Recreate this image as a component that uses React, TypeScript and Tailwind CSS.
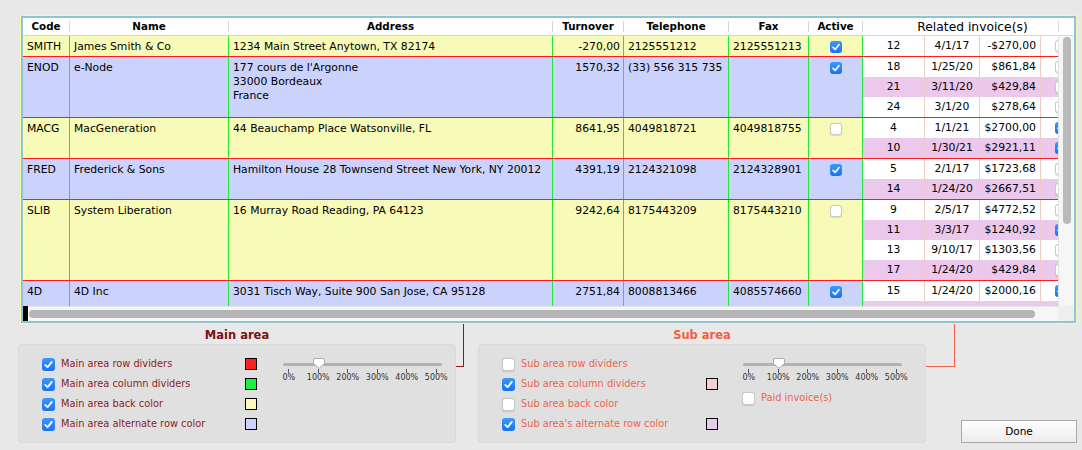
import React from "react";

type Invoice = { num: string; date: string; amount: string; paid: boolean };
type Row = {
  code: string;
  name: string;
  address: string[];
  turnover: string;
  phone: string;
  fax: string;
  active: boolean;
  invoices: Invoice[];
};

const rows: Row[] = [
  {
    code: "SMITH",
    name: "James Smith & Co",
    address: ["1234 Main Street Anytown, TX 82174"],
    turnover: "-270,00",
    phone: "2125551212",
    fax: "2125551213",
    active: true,
    invoices: [{ num: "12", date: "4/1/17", amount: "-$270,00", paid: false }],
  },
  {
    code: "ENOD",
    name: "e-Node",
    address: ["177 cours de l'Argonne", "33000 Bordeaux", "France"],
    turnover: "1570,32",
    phone: "(33) 556 315 735",
    fax: "",
    active: true,
    invoices: [
      { num: "18", date: "1/25/20", amount: "$861,84", paid: false },
      { num: "21", date: "3/11/20", amount: "$429,84", paid: false },
      { num: "24", date: "3/1/20", amount: "$278,64", paid: false },
    ],
  },
  {
    code: "MACG",
    name: "MacGeneration",
    address: ["44 Beauchamp Place Watsonville, FL"],
    turnover: "8641,95",
    phone: "4049818721",
    fax: "4049818755",
    active: false,
    invoices: [
      { num: "4", date: "1/1/21", amount: "$2700,00", paid: true },
      { num: "10", date: "1/30/21", amount: "$2921,11", paid: true },
    ],
  },
  {
    code: "FRED",
    name: "Frederick & Sons",
    address: ["Hamilton House 28 Townsend Street New York, NY 20012"],
    turnover: "4391,19",
    phone: "2124321098",
    fax: "2124328901",
    active: true,
    invoices: [
      { num: "5", date: "2/1/17", amount: "$1723,68", paid: false },
      { num: "14", date: "1/24/20", amount: "$2667,51", paid: false },
    ],
  },
  {
    code: "SLIB",
    name: "System Liberation",
    address: ["16 Murray Road Reading, PA 64123"],
    turnover: "9242,64",
    phone: "8175443209",
    fax: "8175443210",
    active: false,
    invoices: [
      { num: "9", date: "2/5/17", amount: "$4772,52", paid: false },
      { num: "11", date: "3/3/17", amount: "$1240,92", paid: true },
      { num: "13", date: "9/10/17", amount: "$1303,56", paid: false },
      { num: "17", date: "1/24/20", amount: "$429,84", paid: false },
    ],
  },
  {
    code: "4D",
    name: "4D Inc",
    address: ["3031 Tisch Way, Suite 900 San Jose, CA 95128"],
    turnover: "2751,84",
    phone: "8008813466",
    fax: "4085574660",
    active: true,
    invoices: [
      { num: "15", date: "1/24/20", amount: "$2000,16", paid: true },
      { num: "", date: "", amount: "", paid: false },
    ],
  },
];

function Check({ checked, big }: { checked: boolean; big?: boolean }) {
  const size = big ? "w-[13px] h-[13px]" : "w-[12px] h-[12px]";
  if (checked) {
    return (
      <div
        className={`${size} shrink-0 rounded-[3px] bg-gradient-to-b from-[#3d97ff] to-[#1572f3] flex items-center justify-center`}
      >
        <svg viewBox="0 0 13 13" className="w-full h-full">
          <path
            d="M3.3 6.9 L5.6 9.2 L9.8 3.9"
            fill="none"
            stroke="white"
            strokeWidth="1.8"
            strokeLinecap="round"
            strokeLinejoin="round"
          />
        </svg>
      </div>
    );
  }
  return (
    <div
      className={`${size} shrink-0 rounded-[3px] bg-white border border-[#c9c9c9] shadow-[0_0.5px_1px_rgba(0,0,0,0.12)]`}
    />
  );
}

function HeadCell({ w, label, bold = true }: { w: string; label: string; bold?: boolean }) {
  return (
    <div className={`${w} shrink-0 flex items-center h-full`}>
      <div
        className={`flex-1 text-center pt-[2px] ${bold ? "font-bold text-[10.3px]" : "text-[12.3px] pl-[24px] whitespace-nowrap"}`}
      >
        {label}
      </div>
      <div className="w-[1px] h-[11px] bg-[#d6d6d6]" />
    </div>
  );
}

function Slider() {
  const ticks = ["0%", "100%", "200%", "300%", "400%", "500%"];
  return (
    <div className="flex flex-col">
      <div className="relative h-[20px] flex items-center">
        <div className="w-[159px] h-[3px] rounded-full bg-[#b2b2b2]" />
        <svg
          viewBox="0 0 12 11"
          className="absolute left-[30px] top-[4px] w-[12px] h-[11px]"
        >
          <path
            d="M2 0.5 H10 Q11.5 0.5 11.5 2 V5.6 L6 10.4 L0.5 5.6 V2 Q0.5 0.5 2 0.5 Z"
            fill="white"
            stroke="#a5a5a5"
            strokeWidth="0.9"
          />
        </svg>
      </div>
      <div className="-mt-[5px] -ml-[9px] w-[177px] grid grid-cols-6">
        {ticks.map((t) => (
          <div key={t} className="flex flex-col items-center">
            <div className="w-[1px] h-[4px] bg-[#555]" />
            <div className="text-[8px] leading-[10px] text-[#333]">{t}</div>
          </div>
        ))}
      </div>
    </div>
  );
}

type Opt = { label: string; checked: boolean; swatch?: string };

function Panel({
  title,
  titleColor,
  labelColor,
  opts,
  labelW,
  sliderGap,
  extra,
}: {
  title: string;
  titleColor: string;
  labelColor: string;
  opts: Opt[];
  labelW: string;
  sliderGap: string;
  extra?: React.ReactNode;
}) {
  return (
    <div className="flex flex-col w-full">
      <div className={`h-[20px] leading-[22px] text-center font-bold text-[11.5px] ${titleColor}`}>
        {title}
      </div>
      <div className="h-[99px] rounded-[4px] bg-[#e0e0e0] border border-[#d9d9d9] pl-[23px] pt-[9px] flex">
        <div className="flex flex-col">
          {opts.map((o) => (
            <div key={o.label} className="h-[20px] flex items-center">
              <Check checked={o.checked} big />
              <div className={`ml-[6px] pt-[1px] ${labelW} text-[9.8px] ${labelColor}`}>{o.label}</div>
              {o.swatch ? (
                <div className={`w-[12px] h-[12px] border border-black ${o.swatch}`} />
              ) : (
                <div className="w-[12px] h-[12px]" />
              )}
            </div>
          ))}
        </div>
        <div className={`${sliderGap} flex flex-col`}>
          <Slider />
          {extra}
        </div>
      </div>
    </div>
  );
}

export default function App() {
  const mainCell = "shrink-0 border-r border-[#22e63a] px-[4px] pt-[4px] leading-[14px]";
  const subCell = "shrink-0 border-r border-[#f1cac5] h-full flex items-center pt-[1px]";

  return (
    <div className="w-[1082px] h-[450px] bg-[#e8e8e8] overflow-hidden font-['DejaVu_Sans',sans-serif] text-black">
      {/* Table frame */}
      <div className="ml-[20px] mt-[15px] w-[1057px] border border-[#f4f8b4]">
        <div className="border-2 border-[#8fc5d3] bg-white">
          {/* Header */}
          <div className="h-[18px] flex border-b border-[#d9d9d9] pb-[1px]">
            <HeadCell w="w-[47px]" label="Code" />
            <HeadCell w="w-[159px]" label="Name" />
            <HeadCell w="w-[324px]" label="Address" />
            <HeadCell w="w-[71px]" label="Turnover" />
            <HeadCell w="w-[105px]" label="Telephone" />
            <HeadCell w="w-[80px]" label="Fax" />
            <HeadCell w="w-[54px]" label="Active" />
            <HeadCell w="w-[196px]" label="Related invoice(s)" bold={false} />
          </div>

          {/* Body */}
          <div className="flex h-[270px]">
            <div className="w-[1035px] overflow-hidden">
              <div className="w-[1100px] text-[10.8px]">
                {rows.map((r, i) => (
                  <div
                    key={r.code}
                    className={`flex border-b border-[#ff1c1c] ${i % 2 === 0 ? "bg-[#f8fbb7]" : "bg-[#cbd2fb]"}`}
                  >
                    <div className={`${mainCell} w-[47px]`}>{r.code}</div>
                    <div className={`${mainCell} w-[159px]`}>{r.name}</div>
                    <div className={`${mainCell} w-[324px] whitespace-nowrap`}>
                      {r.address.map((a) => (
                        <div key={a}>{a}</div>
                      ))}
                    </div>
                    <div className={`${mainCell} w-[71px] text-right pr-[3px]`}>{r.turnover}</div>
                    <div className={`${mainCell} w-[105px] whitespace-nowrap`}>{r.phone}</div>
                    <div className={`${mainCell} w-[80px]`}>{r.fax}</div>
                    <div className={`${mainCell} w-[54px] flex justify-center !pt-[5px]`}>
                      <Check checked={r.active} />
                    </div>
                    <div className="flex flex-col">
                      {r.invoices.map((inv, j) => (
                        <div
                          key={j}
                          className={`h-[20px] flex ${j % 2 === 0 ? "bg-white" : "bg-[#ebc8ec]"}`}
                        >
                          <div className={`${subCell} w-[62px] justify-center`}>{inv.num}</div>
                          <div className={`${subCell} w-[55px] justify-center`}>{inv.date}</div>
                          <div className={`${subCell} w-[61px] justify-end pr-[4px]`}>{inv.amount}</div>
                          <div className="w-[60px] h-full flex items-center pl-[14px]">
                            <Check checked={inv.paid} />
                          </div>
                        </div>
                      ))}
                    </div>
                  </div>
                ))}
              </div>
            </div>
            {/* vertical scrollbar */}
            <div className="w-[16px] bg-[#f6f6f6] border-l border-[#e3e3e3] pl-[4px] pt-[1px]">
              <div className="w-[8px] h-[187px] rounded-full bg-[#b9b9b9]" />
            </div>
          </div>

          {/* Horizontal scrollbar */}
          <div className="h-[15px] flex">
            <div className="w-[5px] bg-black" />
            <div className="flex-1 bg-[#f6f6f6] border-t border-[#e6e6e6] pl-[1px] pt-[3px]">
              <div className="w-[1006px] h-[8px] rounded-full bg-[#b5b5b5]" />
            </div>
            <div className="w-[16px] bg-[#efefef]" />
          </div>
        </div>
      </div>

      {/* Bottom options */}
      <div className="ml-[18px] flex items-start">
        <div className="w-[438px]">
          <Panel
            title="Main area"
            titleColor="text-[#7b1313]"
            labelColor="text-[#8b1e1e]"
            labelW="w-[184px]"
            sliderGap="ml-[26px]"
            opts={[
              { label: "Main area row dividers", checked: true, swatch: "bg-[#ff2020]" },
              { label: "Main area column dividers", checked: true, swatch: "bg-[#1ff03f]" },
              { label: "Main area back color", checked: true, swatch: "bg-[#fafcbc]" },
              { label: "Main area alternate row color", checked: true, swatch: "bg-[#cdd3fb]" },
            ]}
          />
        </div>
        <div className="w-[8px] h-[43px] border-r border-b border-[#8b1a1a]" />
        <div className="ml-[14px] w-[448px]">
          <Panel
            title="Sub area"
            titleColor="text-[#f45d3d]"
            labelColor="text-[#f0634b]"
            labelW="w-[185px]"
            sliderGap="ml-[25px]"
            opts={[
              { label: "Sub area row dividers", checked: false },
              { label: "Sub area column dividers", checked: true, swatch: "bg-[#f1d2ce]" },
              { label: "Sub area back color", checked: false },
              { label: "Sub area's alternate row color", checked: true, swatch: "bg-[#ecc8ec]" },
            ]}
            extra={
              <div className="mt-[5px] -ml-[1px] h-[20px] flex items-center">
                <Check checked={false} big />
                <div className="ml-[6px] pt-[1px] text-[9.8px] text-[#f0634b]">Paid invoice(s)</div>
              </div>
            }
          />
        </div>
        <div className="w-[29px] h-[43px] border-r border-b border-[#f26148]" />
        <button className="ml-[6px] mt-[96px] w-[116px] h-[23px] border border-[#a9a9a9] bg-gradient-to-b from-white to-[#ececec] text-[10.5px] text-black flex items-center justify-center">
          Done
        </button>
      </div>
    </div>
  );
}
